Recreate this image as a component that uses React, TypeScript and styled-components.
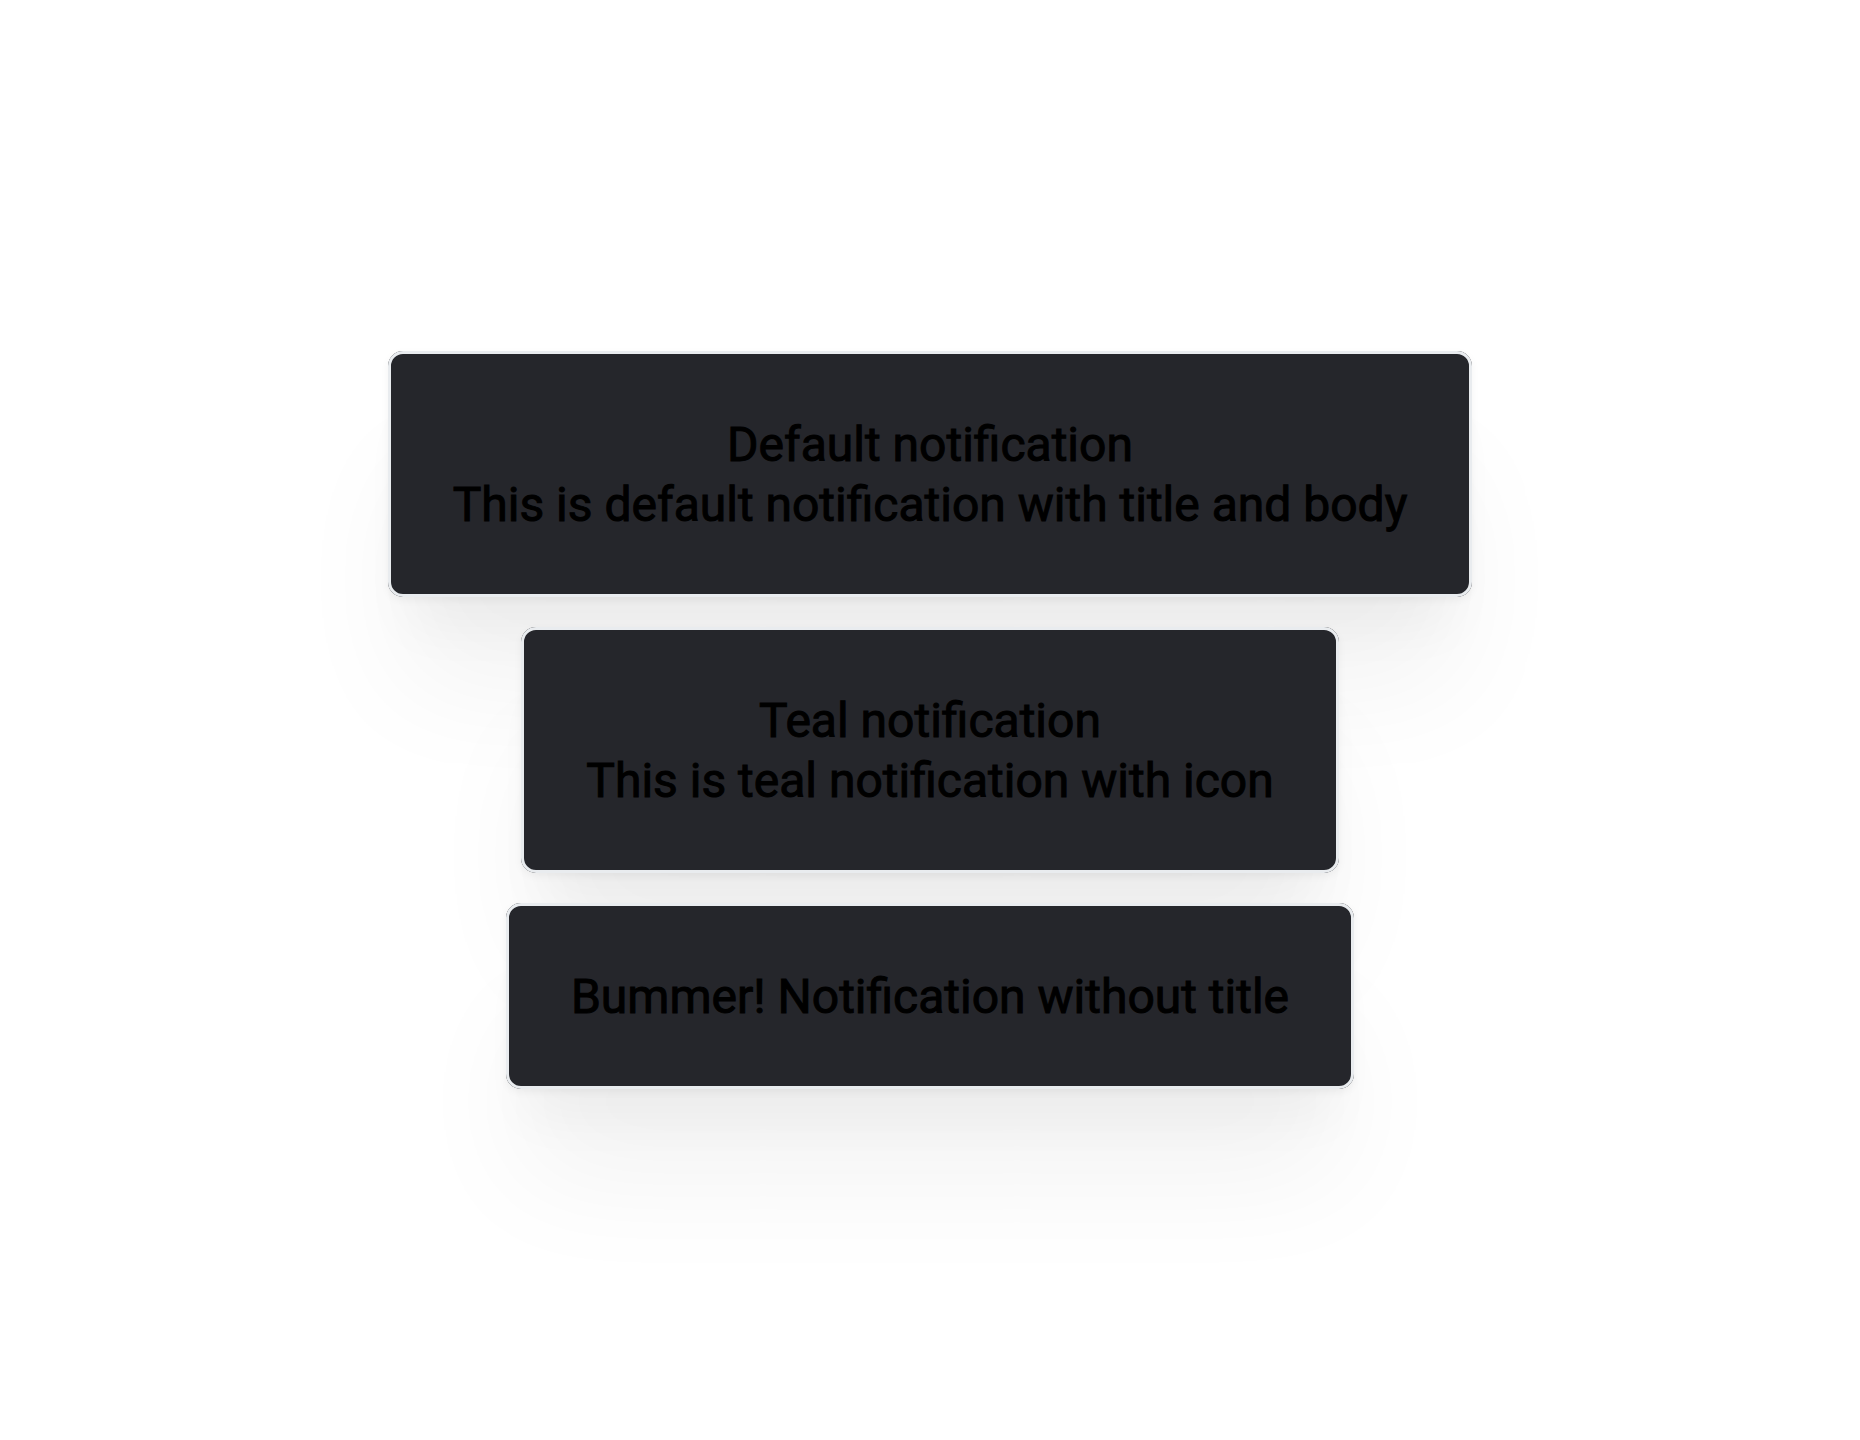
import React from "react";
import styled, { createGlobalStyle } from "styled-components";

const GlobalStyle = createGlobalStyle`
  body {
    margin: 0;
    background: #fff;
  }
`;

const Page = styled.main`
  box-sizing: border-box;
  min-height: 100vh;
  display: flex;
  flex-direction: column;
  align-items: center;
  justify-content: center;
  gap: 30px;
  padding: 36px;
  font-family: Roboto, "Liberation Sans", sans-serif;
  font-size: 48px;
  line-height: 60px;
  color: #000;
`;

const Notification = styled.section`
  border-radius: 15px;
  background: #25262b;
  box-shadow:
    0 3px 9px rgba(0, 0, 0, 0.05),
    0 105px 120px -15px rgba(0, 0, 0, 0.05),
    0 51px 51px -21px rgba(0, 0, 0, 0.04);
`;

const Content = styled.div`
  padding: 61px 62px 59px;
  border: 3px solid #e9ecef;
  border-radius: 15px;
  text-align: center;
  -webkit-text-stroke: 1px #000;
`;

const Title = styled.div``;

const Body = styled.div``;

const notifications = [
  { title: "Default notification", body: "This is default notification with title and body" },
  { title: "Teal notification", body: "This is teal notification with icon" },
  { body: "Bummer! Notification without title" },
];

export default function App() {
  return (
    <>
      <GlobalStyle />
      <Page>
        {notifications.map(({ title, body }) => (
          <Notification key={body} role="alert">
            <Content>
              {title && <Title>{title}</Title>}
              <Body>{body}</Body>
            </Content>
          </Notification>
        ))}
      </Page>
    </>
  );
}
